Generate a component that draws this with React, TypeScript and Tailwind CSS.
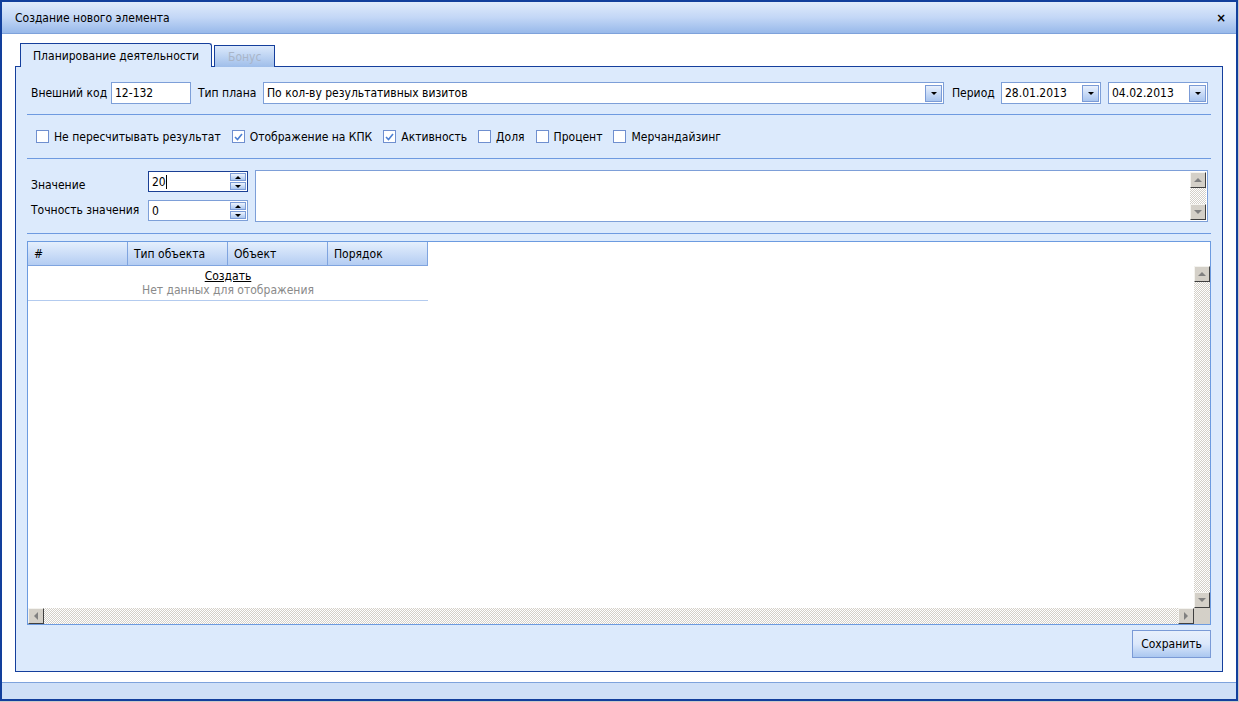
import React from 'react';

const FONT = 'font-["DejaVu_Sans_Condensed","DejaVu_Sans",sans-serif]';

function Arrow({ dir, color = '#808080', size = 4 }: { dir: 'up' | 'down' | 'left' | 'right'; color?: string; size?: number }) {
  const s = size;
  const pts =
    dir === 'up'
      ? `0,${s} ${s},0 ${2 * s},${s}`
      : dir === 'down'
      ? `0,0 ${2 * s},0 ${s},${s}`
      : dir === 'left'
      ? `${s},0 ${s},${2 * s} 0,${s}`
      : `0,0 0,${2 * s} ${s},${s}`;
  const w = dir === 'up' || dir === 'down' ? 2 * s : s;
  const h = dir === 'up' || dir === 'down' ? s : 2 * s;
  return (
    <svg width={w} height={h} viewBox={`0 0 ${w} ${h}`}>
      <polygon points={pts} fill={color} />
    </svg>
  );
}

function ScrollBtn({ dir }: { dir: 'up' | 'down' | 'left' | 'right' }) {
  return (
    <div className="w-[16px] h-[16px] shrink-0 bg-[#d4d0c8] border border-t-[#f4f3ef] border-l-[#f4f3ef] border-b-[#404040] border-r-[#404040] flex items-center justify-center">
      <Arrow dir={dir} />
    </div>
  );
}

const track =
  'bg-[repeating-conic-gradient(#d4d0c8_0%_25%,#ffffff_0%_50%)] bg-[length:2px_2px]';

function VScroll({ className = '' }: { className?: string }) {
  return (
    <div className={`w-[16px] flex flex-col ${track} ${className}`}>
      <ScrollBtn dir="up" />
      <div className="flex-1" />
      <ScrollBtn dir="down" />
    </div>
  );
}

function DropBtn() {
  return (
    <div className="w-[17px] h-[17px] border border-[#7b9bd6] bg-gradient-to-b from-[#e9f1fd] to-[#a9c5ef] flex items-center justify-center">
      <Arrow dir="down" color="#000" size={3} />
    </div>
  );
}

function Combo({ value, className = '' }: { value: string; className?: string }) {
  return (
    <div className={`h-[22px] border border-[#7d9fd8] bg-white flex items-center pl-[3px] pr-[1px] ${className}`}>
      <span className="flex-1 truncate">{value}</span>
      <DropBtn />
    </div>
  );
}

function Spin({ value, focused }: { value: string; focused?: boolean }) {
  return (
    <div
      className={`w-[100px] h-[21px] bg-white flex items-center pl-[3px] pr-[1px] border ${
        focused ? 'border-[#1a3f94]' : 'border-[#7d9fd8]'
      }`}
    >
      <span className="flex-1 flex items-center">
        {value}
        {focused && <span className="inline-block w-px h-[14px] bg-black" />}
      </span>
      <div className="flex flex-col gap-[1px]">
        {['up', 'down'].map((d) => (
          <div
            key={d}
            className="w-[16px] h-[8px] border border-[#7b9bd6] bg-gradient-to-b from-[#eef4fd] to-[#aac6ef] flex items-center justify-center"
          >
            <Arrow dir={d as 'up' | 'down'} color="#000" size={3} />
          </div>
        ))}
      </div>
    </div>
  );
}

function Check({ label, checked }: { label: string; checked?: boolean }) {
  return (
    <div className="flex items-center gap-[5px]">
      <div className="w-[13px] h-[13px] border border-[#6f8fcf] bg-white flex items-center justify-center">
        {checked && (
          <svg width="9" height="8" viewBox="0 0 9 8">
            <path d="M1 4 L3.5 6.5 L8 1" stroke="#4b7fd2" strokeWidth="1.6" fill="none" />
          </svg>
        )}
      </div>
      <span>{label}</span>
    </div>
  );
}

const Sep = () => <div className="h-px bg-[#6e9ae0]" />;

export default function App() {
  return (
    <div className={`w-[1239px] h-[702px] bg-[#c9c9c9] ${FONT} text-[12px] text-black`}>
      <div className="w-[1238px] h-[701px] border-2 border-[#123f9c] bg-white flex flex-col">
        {/* title */}
        <div className="h-[32px] shrink-0 bg-gradient-to-b from-[#e0ebfb] via-[#c3d7f6] to-[#98b9ea] border-b border-[#7ea2db] flex items-center justify-between pl-[13px] pr-[10px]">
          <span className="text-[12px]">Создание нового элемента</span>
          <span className="font-bold text-[13px] leading-none">×</span>
        </div>

        {/* body */}
        <div className="flex-1 flex flex-col px-[13px] pt-[9px] pb-[10px]">
          {/* tabs */}
          <div className="flex items-end pl-[5px] gap-[2px] h-[24px] -mb-px relative z-10">
            <div className="h-[24px] px-[12px] border border-b-0 border-[#153f9c] bg-[#dceafc] rounded-tr-[3px] flex items-center">
              Планирование деятельности
            </div>
            <div className="h-[22px] px-[13px] border border-b-0 border-[#153f9c] bg-gradient-to-b from-[#dce9fb] to-[#9fbeea] text-[#a9b5c8] flex items-center">
              Бонус
            </div>
          </div>

          {/* panel */}
          <div className="flex-1 border border-[#153f9c] bg-[#dceafc] px-[11px] pt-[15px] pb-[13px] flex flex-col">
            {/* row 1 */}
            <div className="flex items-center h-[22px]">
              <span className="pl-[4px] w-[84px]">Внешний код</span>
              <div className="w-[80px] h-[22px] border border-[#7d9fd8] bg-white flex items-center pl-[3px]">12-132</div>
              <span className="ml-[7px] w-[65px]">Тип плана</span>
              <Combo value="По кол-ву результативных визитов" className="flex-1" />
              <span className="ml-[8px] w-[49px]">Период</span>
              <Combo value="28.01.2013" className="w-[100px]" />
              <Combo value="04.02.2013" className="w-[100px] ml-[7px] mr-[3px]" />
            </div>

            <div className="mt-[10px]">
              <Sep />
            </div>

            {/* checks */}
            <div className="flex items-center gap-[11px] pl-[9px] h-[43px]">
              <Check label="Не пересчитывать результат" />
              <Check label="Отображение на КПК" checked />
              <Check label="Активность" checked />
              <Check label="Доля" />
              <Check label="Процент" />
              <Check label="Мерчандайзинг" />
            </div>

            <Sep />

            {/* values */}
            <div className="flex mt-[11px] h-[52px]">
              <div className="w-[121px] flex flex-col justify-around pl-[4px] pt-[2px]">
                <span>Значение</span>
                <span>Точность значения</span>
              </div>
              <div className="flex flex-col gap-[8px] pt-[1px]">
                <Spin value="20" focused />
                <Spin value="0" />
              </div>
              <div className="flex-1 ml-[7px] mr-[3px] border border-[#7d9fd8] bg-white flex justify-end pr-[1px] py-[1px]">
                <VScroll />
              </div>
            </div>

            <div className="mt-[11px]">
              <Sep />
            </div>

            {/* grid */}
            <div className="mt-[7px] flex-1 border border-[#6c9be0] bg-white flex flex-col">
              <div className="flex flex-1 min-h-0">
                <div className="flex-1 flex flex-col">
                  <div className="flex w-[400px]">
                    {['#', 'Тип объекта', 'Объект', 'Порядок'].map((h) => (
                      <div
                        key={h}
                        className="w-[100px] h-[24px] pl-[6px] flex items-center border-r border-b border-[#7fa4df] bg-gradient-to-b from-[#e5effd] to-[#b4cdf2]"
                      >
                        {h}
                      </div>
                    ))}
                  </div>
                  <div className="w-[400px] h-[35px] border-b border-[#b3cbef] flex flex-col items-center justify-center leading-[14px]">
                    <span className="underline">Создать</span>
                    <span className="text-[#8a8a8a]">Нет данных для отображения</span>
                  </div>
                </div>
                <div className="flex flex-col">
                  <div className="h-[24px]" />
                  <VScroll className="flex-1" />
                </div>
              </div>
              <div className={`flex h-[16px] ${track}`}>
                <ScrollBtn dir="left" />
                <div className="flex-1" />
                <ScrollBtn dir="right" />
                <div className="w-[16px] bg-[#d4d0c8]" />
              </div>
            </div>

            {/* save */}
            <div className="flex justify-end mt-[5px]">
              <button className="w-[79px] h-[28px] border border-[#7a9ad6] bg-gradient-to-b from-[#e8f0fc] via-[#dbe8fb] to-[#aac7f0] text-[12px]">
                Сохранить
              </button>
            </div>
          </div>
        </div>

        {/* footer */}
        <div className="h-[17px] shrink-0 bg-[#cfe0f7] border-t border-[#7ea3dc]" />
      </div>
    </div>
  );
}
